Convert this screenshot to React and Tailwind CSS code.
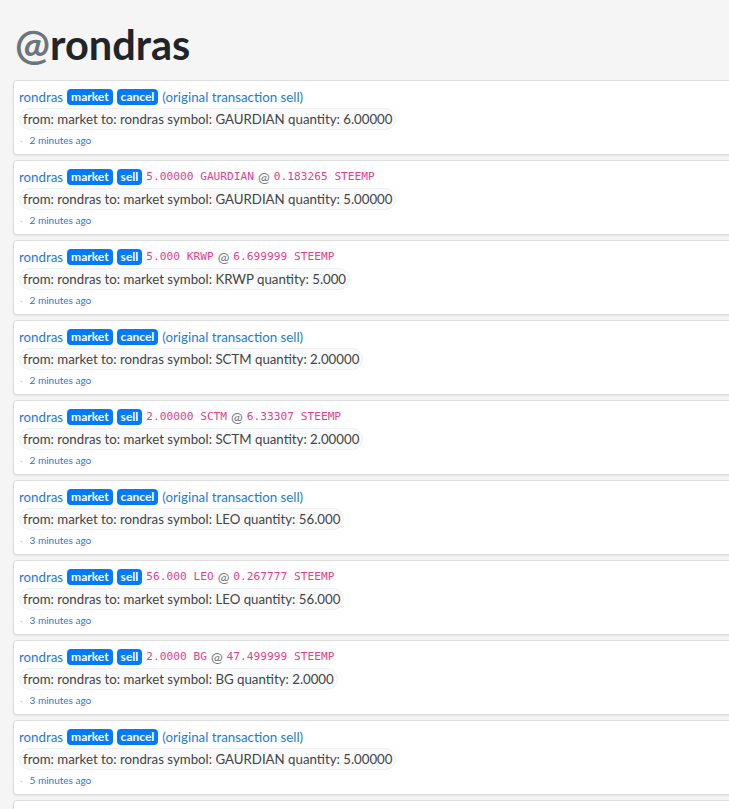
import React from "react";

const items = [
  { type: "cancel", detail: "from: market to: rondras symbol: GAURDIAN quantity: 6.00000", time: "2 minutes ago" },
  { type: "sell", qty: "5.00000 GAURDIAN", price: "0.183265 STEEMP", detail: "from: rondras to: market symbol: GAURDIAN quantity: 5.00000", time: "2 minutes ago" },
  { type: "sell", qty: "5.000 KRWP", price: "6.699999 STEEMP", detail: "from: rondras to: market symbol: KRWP quantity: 5.000", time: "2 minutes ago" },
  { type: "cancel", detail: "from: market to: rondras symbol: SCTM quantity: 2.00000", time: "2 minutes ago" },
  { type: "sell", qty: "2.00000 SCTM", price: "6.33307 STEEMP", detail: "from: rondras to: market symbol: SCTM quantity: 2.00000", time: "2 minutes ago" },
  { type: "cancel", detail: "from: market to: rondras symbol: LEO quantity: 56.000", time: "3 minutes ago" },
  { type: "sell", qty: "56.000 LEO", price: "0.267777 STEEMP", detail: "from: rondras to: market symbol: LEO quantity: 56.000", time: "3 minutes ago" },
  { type: "sell", qty: "2.0000 BG", price: "47.499999 STEEMP", detail: "from: rondras to: market symbol: BG quantity: 2.0000", time: "3 minutes ago" },
  { type: "cancel", detail: "from: market to: rondras symbol: GAURDIAN quantity: 5.00000", time: "5 minutes ago" },
  { type: "cancel", detail: "from: market to: rondras symbol: GAURDIAN quantity: 5.00000", time: "5 minutes ago" },
];

function Badge({ children }) {
  return (
    <span className="inline-block rounded-[4px] bg-[#007bff] px-[4px] text-[12px] font-bold leading-[16px] text-white">
      {children}
    </span>
  );
}

function Card({ it }) {
  return (
    <div className="w-[760px] shrink-0 rounded-[4px] border border-[#dedede] bg-white pl-[5px] pr-2 pt-[6px] pb-[7px] shadow-[0_1px_2px_rgba(0,0,0,0.08)]">
      <div className="flex items-center gap-[4px] text-[13.3px] leading-[20px]">
        <span className="text-[#1f7ad8]">rondras</span>
        <Badge>market</Badge>
        <Badge>{it.type}</Badge>
        {it.type === "cancel" ? (
          <span className="text-[#1f7ad8]">(original transaction sell)</span>
        ) : (
          <span className="flex items-center gap-[4px]">
            <span className="font-['DejaVu_Sans_Mono',monospace] text-[11.2px] text-[#e83e8c]">{it.qty}</span>
            <span className="text-[14px] text-[#6c757d]">@</span>
            <span className="font-['DejaVu_Sans_Mono',monospace] text-[11.2px] text-[#e83e8c]">{it.price}</span>
          </span>
        )}
      </div>
      <div className="mt-[1px] flex">
        <span className="rounded-full border border-[#eef0f2] bg-[#f8f9fa] px-[3px] text-[13.25px] leading-[20px] text-[#444]">
          {it.detail}
        </span>
      </div>
      <div className="mt-[3px] flex items-center gap-[7px] pl-[1px] text-[10px] leading-[14px]">
        <span className="text-[#c8c8c8]">·</span>
        <span className="text-[#1f7ad8]">{it.time}</span>
      </div>
    </div>
  );
}

export default function App() {
  return (
    <div className="h-[809px] w-[729px] overflow-hidden bg-[#f5f5f5] font-['Lato',sans-serif]">
      <h1 className="pl-[15px] pt-[20px] pb-[12px] text-[41.5px] font-bold leading-[48px] text-[#212529]">
        <span className="text-[#6c757d]">@</span>rondras
      </h1>
      <div className="flex flex-col gap-[5px] pl-[13px]">
        {items.map((it, i) => (
          <Card key={i} it={it} />
        ))}
      </div>
    </div>
  );
}
